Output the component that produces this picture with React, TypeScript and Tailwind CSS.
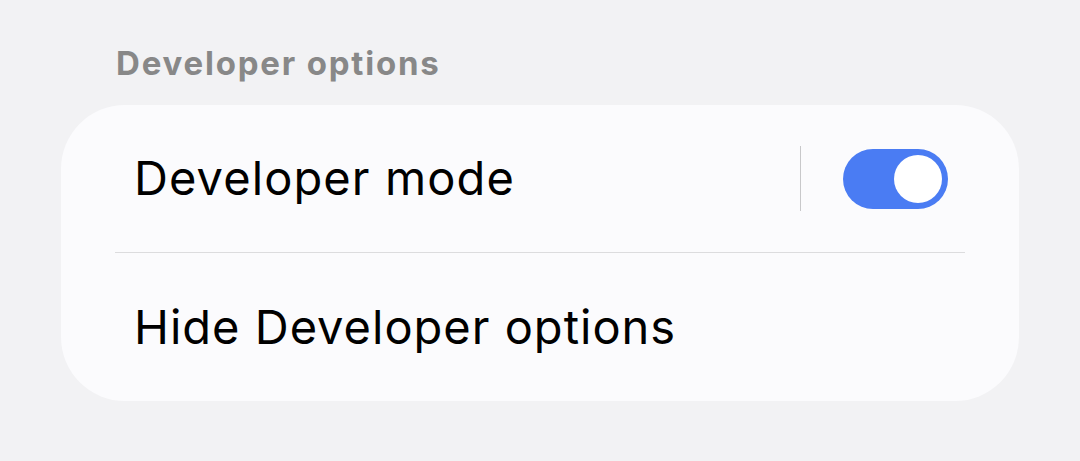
import { useState } from 'react';

export default function App() {
  const [enabled, setEnabled] = useState(true);

  return (
    <div className="w-[1080px] h-[461px] bg-[#f2f2f4] pt-[37px] px-[61px] font-['Inter',sans-serif]">
      <h2 className="pl-[55px] text-[33px] leading-[52px] font-bold tracking-[1.8px] text-[#888888] mb-[16px]">
        Developer options
      </h2>

      <div className="w-[958px] rounded-[64px] bg-[#fbfbfd] px-[54px]">
        {/* Developer mode row */}
        <div className="h-[148px] flex items-center border-b border-[#dcdcde]">
          <span className="flex-1 pl-[19px] text-[47px] tracking-[1.1px] text-black">Developer mode</span>
          <div className="w-px h-[65px] bg-[#c8c8ca] mr-[42px]" />
          <button
            onClick={() => setEnabled(!enabled)}
            className={`w-[105px] h-[60px] rounded-full p-[6px] flex mr-[17px] ${
              enabled ? 'bg-[#4a7cf3] justify-end' : 'bg-[#c4c4c6] justify-start'
            }`}
          >
            <span className="w-[48px] h-[48px] rounded-full bg-white" />
          </button>
        </div>

        {/* Hide row */}
        <div className="h-[148px] flex items-center">
          <span className="pl-[19px] text-[47px] tracking-[1px] text-black">Hide Developer options</span>
        </div>
      </div>
    </div>
  );
}
